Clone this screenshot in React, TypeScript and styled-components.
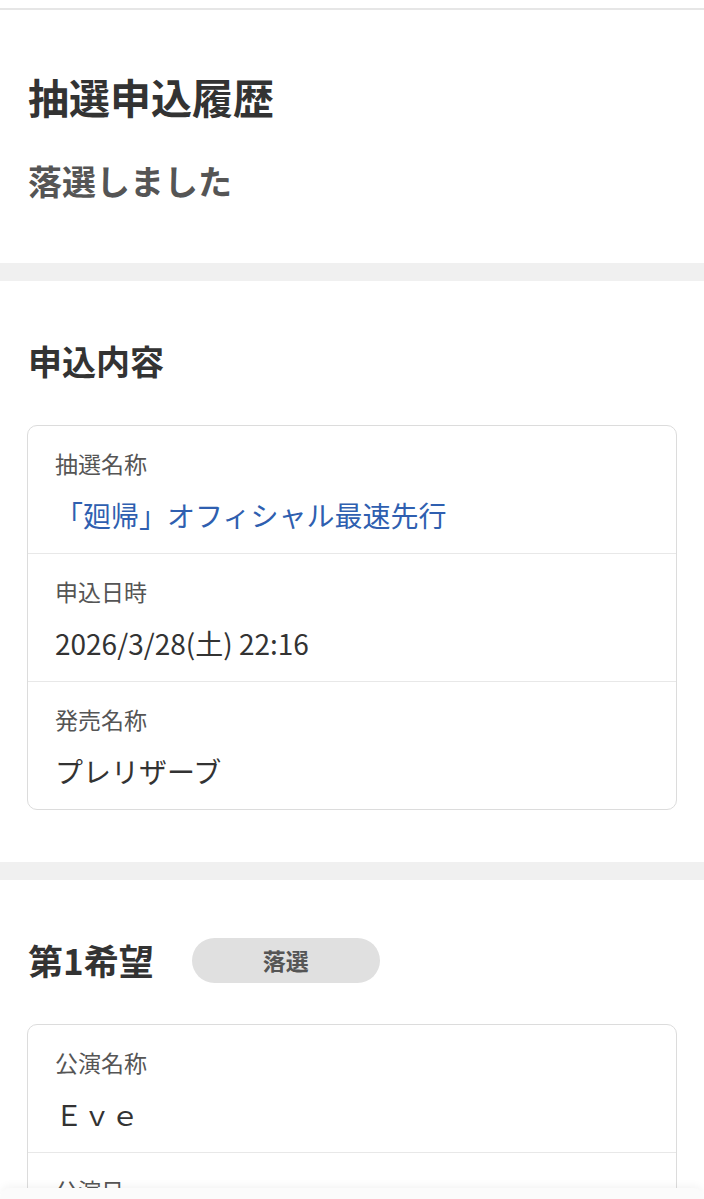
import styled, { createGlobalStyle } from "styled-components";

const GlobalStyle = createGlobalStyle`
    body {
        margin: 0;
        background: #f0f0f0;
        font-family: "Noto Sans CJK JP", "Noto Sans", sans-serif;
        color: #333333;
    }
`;

const Page = styled.div`
    display: flex;
    flex-direction: column;
    gap: 18px;
    min-height: 100vh;
`;

const TopBar = styled.div`
    height: 8px;
    background: #ffffff;
    border-bottom: 2px solid #e6e6e6;
    margin-bottom: -18px;
`;

const Section = styled.section<{ $last?: boolean }>`
    background: #ffffff;
    padding: 56px 28px ${(p) => (p.$last ? "200px" : "52px")};
    display: flex;
    flex-direction: column;
`;

const PageTitle = styled.h1`
    margin: 2px 0 0;
    font-size: 41px;
    line-height: 56px;
    font-weight: 700;
    color: #333333;
`;

const Status = styled.p`
    margin: 33px 0 6px;
    font-size: 34px;
    line-height: 48px;
    font-weight: 700;
    color: #555555;
`;

const HeadingRow = styled.div`
    display: flex;
    align-items: center;
    gap: 38px;
`;

const Heading = styled.h2`
    margin: 0;
    font-size: 34px;
    line-height: 48px;
    font-weight: 700;
    color: #333333;
`;

const ChoiceHeading = styled(Heading)`
    font-size: 35px;
`;

const Pill = styled.span`
    display: inline-flex;
    align-items: center;
    justify-content: center;
    width: 188px;
    height: 45px;
    border-radius: 23px;
    background: #e0e0e0;
    color: #555555;
    font-size: 23px;
    font-weight: 700;
`;

const Card = styled.div`
    margin-top: 40px;
    margin-left: -1px;
    margin-right: -1px;
    border: 1px solid #dcdcdc;
    border-radius: 10px;
    overflow: hidden;
`;

const Row = styled.div`
    padding: 19px 27px 17px;
    border-top: 1px solid #e8e8e8;
    &:first-child {
        border-top: none;
    }
`;

const Label = styled.div`
    font-size: 23px;
    line-height: 36px;
    color: #555555;
`;

const Value = styled.div<{ $link?: boolean }>`
    margin-top: 13px;
    font-size: 28px;
    line-height: 42px;
    color: ${(p) => (p.$link ? "#2f5fb0" : "#333333")};
`;

const BottomSheet = styled.div`
    position: fixed;
    left: 0;
    right: 0;
    bottom: 0;
    height: 11px;
    background: #fbfbfb;
    border-radius: 22px 22px 0 0;
    box-shadow: 0 -2px 8px rgba(0, 0, 0, 0.05);
`;

type Item = { label: string; value: string; link?: boolean };

const entry: Item[] = [
    { label: "抽選名称", value: "「廻帰」オフィシャル最速先行", link: true },
    { label: "申込日時", value: "2026/3/28(土) 22:16" },
    { label: "発売名称", value: "プレリザーブ" },
];

const firstChoice: Item[] = [
    { label: "公演名称", value: "Ｅｖｅ" },
    { label: "公演日", value: "" },
];

function InfoCard({ items }: { items: Item[] }) {
    return (
        <Card>
            {items.map((it) => (
                <Row key={it.label}>
                    <Label>{it.label}</Label>
                    <Value $link={it.link}>{it.value || "\u00a0"}</Value>
                </Row>
            ))}
        </Card>
    );
}

export default function App() {
    return (
        <Page>
            <GlobalStyle />
            <TopBar />
            <Section>
                <PageTitle>抽選申込履歴</PageTitle>
                <Status>落選しました</Status>
            </Section>
            <Section>
                <Heading>申込内容</Heading>
                <InfoCard items={entry} />
            </Section>
            <Section $last>
                <HeadingRow>
                    <ChoiceHeading>第1希望</ChoiceHeading>
                    <Pill>落選</Pill>
                </HeadingRow>
                <InfoCard items={firstChoice} />
            </Section>
            <BottomSheet />
        </Page>
    );
}
